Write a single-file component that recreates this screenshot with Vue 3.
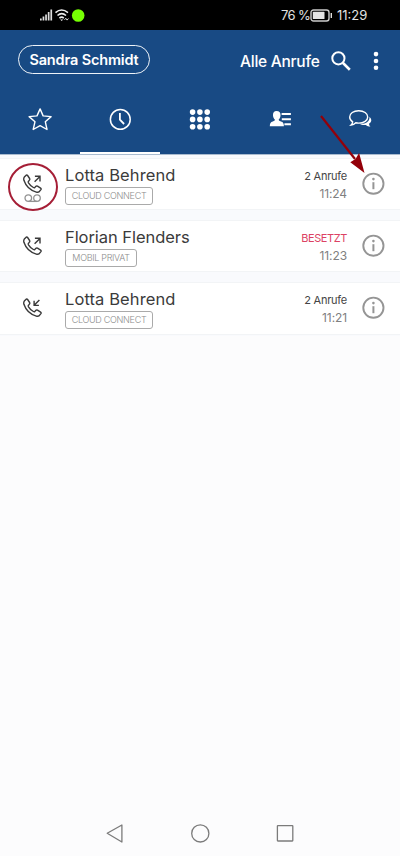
<script setup>
const calls = [
  { name: 'Lotta Behrend', label: 'CLOUD CONNECT', info: '2 Anrufe', time: '11:24', out: true, mail: true, w: 88 },
  { name: 'Florian Flenders', label: 'MOBIL PRIVAT', info: 'BESETZT', time: '11:23', out: true, busy: true, w: 72 },
  { name: 'Lotta Behrend', label: 'CLOUD CONNECT', info: '2 Anrufe', time: '11:21', out: false, w: 88 }
]
const bars = [2, 4, 6, 8.5, 11]
const dots = [0, 1, 2, 3, 4, 5, 6, 7, 8]
</script>

<template>
  <div class="screen">
    <div class="status">
      <svg class="signal" width="48" height="16" viewBox="0 0 48 16">
        <rect v-for="(h, i) in bars" :key="i" :x="1 + i * 2.6" :y="13.5 - h" width="1.7" :height="h" fill="#ddd" />
        <g fill="none" stroke="#eee" stroke-width="1.6">
          <path d="M16.5 5.6q6-5.2 12.5 0" /><path d="M18.5 8.5q4.2-3.6 8.5 0" /><path d="M20.4 11.2q2.4-2 4.4 0" />
        </g>
        <path d="M21.2 12.5h3l-1.5 1.5z" fill="#eee" />
        <path d="M25.5 12.8l1.3-1.5 1.3 1.8 1.3-1.6" stroke="#ddd" fill="none" />
        <circle cx="39.2" cy="8.5" r="6.3" fill="#76ff03" />
      </svg>
      <span class="percent">76 %</span>
      <svg class="battery" width="23" height="13" viewBox="0 0 23 13">
        <rect x="1" y="1" width="18" height="11" rx="2.5" fill="none" stroke="#ccc" stroke-width="1.4" />
        <rect x="2.8" y="2.8" width="11.7" height="7.2" rx=".6" fill="#e4e4e4" />
        <path d="M21.3 4v5" stroke="#ddd" stroke-width="1.4" />
      </svg>
      <span class="clock">11:29</span>
    </div>

    <header>
      <div class="toolbar">
        <span class="pill">Sandra Schmidt</span>
        <span class="filter">Alle Anrufe</span>
        <svg class="search" width="20" height="20" viewBox="0 0 20 20" fill="none" stroke="#fff">
          <circle cx="7.4" cy="7.3" r="6.1" stroke-width="2" /><path d="M11.8 11.8l7 6.9" stroke-width="2.6" />
        </svg>
        <svg class="more" width="6" height="20" viewBox="0 0 6 20" fill="#fff">
          <circle cx="3" cy="3.1" r="2.3" /><circle cx="3" cy="10" r="2.3" /><circle cx="3" cy="16.7" r="2.3" />
        </svg>
      </div>
      <nav>
        <a>
          <svg width="24" height="24" viewBox="0 0 24 24" fill="none" stroke="#fff" stroke-width="1.4" stroke-linejoin="round">
            <path d="M12.1 1.9l3 7 8 .7-5.8 5.1 1.7 7.8-6.9-3.8-6.9 3.8L7 14.7 1.1 9.6l7.9-.7z" />
          </svg>
        </a>
        <a class="active">
          <svg width="24" height="24" viewBox="0 0 24 24" fill="none" stroke="#fff">
            <circle cx="12.3" cy="12.4" r="9.9" stroke-width="1.5" /><path d="M11.9 6v6.7l4.2 4.3" stroke-width="1.8" />
          </svg>
        </a>
        <a>
          <svg width="24" height="24" viewBox="0 0 24 24" fill="#fff">
            <circle v-for="d in dots" :key="d" :cx="4.6 + (d % 3) * 7.3" :cy="5.1 + Math.floor(d / 3) * 7.3" r="2.8" />
          </svg>
        </a>
        <a>
          <svg width="24" height="24" viewBox="0 0 24 24">
            <path d="M8.4 4.1c3 0 4.5 1.8 4.1 4.6-.2 1.9-1 3-1.8 3.8.1 1.3.6 1.4 2.2 1.9 2.3.7 2.9 1.7 3 4.8H1.8c.1-3.2.8-4.1 3-4.8 1.6-.5 2-.6 2.1-1.9-.9-.8-1.7-1.9-1.9-3.8-.4-2.8 1.2-4.6 3.4-4.6z" fill="#fff" />
            <path d="M13.6 7h9.3M13.8 12.2h9.1M16.4 17.3h6.5" stroke="#fff" stroke-width="1.9" fill="none" />
          </svg>
        </a>
        <a>
          <svg width="24" height="24" viewBox="0 0 24 24">
            <path d="M21.4 9.8c3 2.7 2.1 5.5-.4 6.9.1 1.1.7 2.3 1.5 3-1.9 0-3.5-.6-4.6-1.7-2.4.3-4.8-.1-6.4-1.3 6.4.4 10.5-2.4 9.9-6.9z" fill="#fff" />
            <path d="M10.7 3.7c5.2 0 9 2.7 9 6.2s-3.8 6.2-9 6.2c-1.1 0-2-.1-2.9-.3-1.3 1.3-2.9 2.1-4.7 2.3 1-.9 1.5-2 1.6-3.3-2-1.2-3-2.9-3-4.9 0-3.5 3.8-6.2 9-6.2z" fill="#184a84" stroke="#fff" stroke-width="1.4" />
          </svg>
        </a>
      </nav>
    </header>

    <main>
      <article v-for="(c, i) in calls" :key="i">
        <div class="type">
          <svg class="phone" width="20" height="20" viewBox="0 0 20 20" fill="none" stroke="#3a3a3a" stroke-width="1.4" stroke-linejoin="round">
            <path d="M1.3 3.1L3.2 1.2q.8-.5 1.4.3L6.6 4.5q.5.9-.2 1.6L5.5 7.3q-.5.6 0 1.5 1.8 3 4.9 4.7.9.5 1.5-.1l1-1.1q.7-.6 1.6-.1l3.1 1.9q.9.7.3 1.5l-1.6 2q-1.2 1-3 .5Q4.1 15.6.9 6.3.4 4.3 1.3 3.1z" />
            <path v-if="c.out" d="M11.6 7.8l5.1-5.1M11.9 2.3h5.1v5.1" stroke-linejoin="miter" />
            <path v-else d="M16.4 2l-5 5.1M11.1 2.7v4.7h4.8" stroke-linejoin="miter" />
          </svg>
          <svg v-if="c.mail" class="voicemail" width="18" height="9" viewBox="0 0 18 9" fill="none" stroke="#929292" stroke-width="1.3">
            <circle cx="4.3" cy="4.1" r="3.3" /><circle cx="13" cy="4.1" r="3.3" /><path d="M4.3 7.4h8.7" />
          </svg>
          <i v-if="c.mail" class="ring"></i>
        </div>
        <div class="person">
          <div :class="['name', { long: c.busy }]">{{ c.name }}</div>
          <div class="label" :style="{ width: c.w + 'px' }">{{ c.label }}</div>
        </div>
        <div class="meta">
          <div :class="['count', { busy: c.busy }]">{{ c.info }}</div>
          <div class="time">{{ c.time }}</div>
        </div>
        <svg class="info" width="24" height="24" viewBox="0 0 24 24">
          <circle cx="12.4" cy="11.7" r="10.1" fill="none" stroke="#959595" stroke-width="1.9" />
          <circle cx="12.4" cy="7.1" r="1.3" fill="#959595" /><path d="M12.4 10.2v7" stroke="#959595" stroke-width="2" />
        </svg>
      </article>
    </main>

    <footer>
      <svg width="20" height="20" viewBox="0 0 20 20"><path d="M2.2 10.3L16.9 2v17z" /></svg>
      <svg width="20" height="20" viewBox="0 0 20 20"><circle cx="10.3" cy="10.4" r="8.6" /></svg>
      <svg width="20" height="20" viewBox="0 0 20 20"><rect x="2.4" y="2.6" width="15.4" height="15.4" rx=".5" /></svg>
    </footer>

    <svg class="arrow" width="46" height="60" viewBox="0 0 46 60">
      <path d="M1 1l34 43" stroke="#930009" stroke-width="2.2" /><path d="M44.5 58L30.3 47.2l5.2-3.1 3.6-6z" fill="#930009" />
    </svg>
  </div>
</template>

<style>
body { margin: 0; }
</style>

<style scoped>
.screen { position: relative; width: 400px; height: 856px; display: flex; flex-direction: column; background: #fcfcfd; font-family: Inter, sans-serif; overflow: hidden; }
svg { display: block; flex: none; }
.status { height: 30px; background: #000; color: #e2e2e2; display: flex; align-items: center; box-sizing: border-box; padding: 0 32px 0 39px; font: 13px/30px Inter, sans-serif; white-space: nowrap; }
.signal { margin-top: -1px; }
.percent { margin-left: auto; width: 30px; letter-spacing: -.6px; }
.clock { width: 32px; margin-left: 4px; margin-right: -1px; letter-spacing: 0; }
.battery { margin-left: -1px; }
header { height: 124px; background: #184a84; color: #fff; border-bottom: 1px solid #a9bbcf; box-sizing: content-box; }
.toolbar { height: 59px; display: flex; align-items: center; padding: 0 21px 0 18px; }
.pill { box-sizing: border-box; width: 132px; height: 29px; border: 1.5px solid #eef3f8; border-radius: 15px; font: 600 14.5px/28px Inter, sans-serif; letter-spacing: -.15px; text-align: center; white-space: nowrap; }
.filter { margin-left: auto; width: 80px; font: 500 15.5px/20px Inter, sans-serif; letter-spacing: -.25px; margin-top: 5px; white-space: nowrap; }
.search { margin: 3px 0 0 11px; }
.more { margin: 3px 0 0 22px; }
nav { height: 65px; display: grid; grid-template-columns: repeat(5, 80px); }
nav a { display: flex; justify-content: center; padding-top: 18px; box-sizing: border-box; border-bottom: 2px solid transparent; }
nav a.active { border-bottom: 2px solid #fff; }
main { display: grid; gap: 10px; background: #f9fafd; padding: 3px 0 1px; }
article { display: flex; height: 50.2px; border: solid #f2f4f6; border-width: 1px 0; background: #fff; }
.type { position: relative; width: 65px; box-sizing: border-box; padding: 15px 0 0 23px; }
.voicemail { margin: 0 0 0 1px; }
.ring { position: absolute; left: 8px; top: 4px; width: 46px; height: 44px; border: 2px solid #a51e36; border-radius: 50%; }
.person { width: 160px; padding-top: 6px; }
.name { font: 16.5px/20px Inter, sans-serif; letter-spacing: .1px; color: #3b3b3b; white-space: nowrap; }
.name.long { letter-spacing: -.06px; }
.label { box-sizing: border-box; height: 18px; margin-top: 2px; border: 1px solid #aaa; border-radius: 3px; font: 300 9px/16px Inter, sans-serif; letter-spacing: -.3px; color: #8c8c8c; text-align: center; white-space: nowrap; }
.meta { margin-left: auto; padding-top: 8.5px; text-align: right; white-space: nowrap; }
.count { font-size: 11px; line-height: 17px; letter-spacing: -.25px; color: #444; }
.count.busy { letter-spacing: -.4px; color: #dc4263; }
.time { font-size: 12px; line-height: 18px; letter-spacing: -.1px; color: #808080; }
.info { margin: 13px 15px 0 14px; }
footer { margin-top: auto; height: 46px; display: flex; justify-content: center; gap: 65px; align-items: center; }
footer svg { fill: none; stroke: #7b7b7b; stroke-width: 1.3; stroke-linejoin: round; }
.arrow { position: absolute; left: 320px; top: 115px; }
</style>
